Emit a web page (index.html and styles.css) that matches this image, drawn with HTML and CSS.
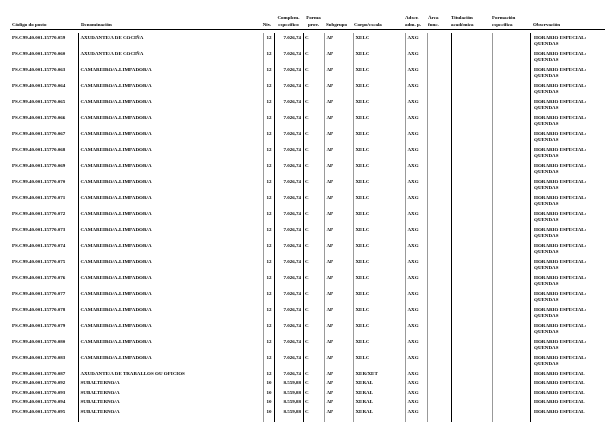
FILE: index.html
```html
<!DOCTYPE html>
<html lang="gl">
<head>
<meta charset="utf-8">
<title>RPT</title>
<link rel="stylesheet" href="styles.css">
</head>
<body>
<div class="sheet">
  <div class="grid head">
    <div class="h c1">Código do posto</div>
    <div class="h c2">Denominación</div>
    <div class="h c3 ctr">Nív.</div>
    <div class="h c4 ctr">Complem.<br>específico</div>
    <div class="h c5 ctr">Forma<br>prov.</div>
    <div class="h c6">Subgrupo</div>
    <div class="h c7">Corpo/escala</div>
    <div class="h c8">Adscr.<br>adm. p.</div>
    <div class="h c9">Área<br>func.</div>
    <div class="h c10">Titulación<br>académica</div>
    <div class="h c11">Formación<br>específica</div>
    <div class="h c12">Observación</div>
  </div>
  <div class="body" id="body"></div>
</div>
<script src="app.js"></script>
</body>
</html>
```

FILE: app.js
```js
const rows = [];
const cam = ["063","064","065","066","067","068","069","070","071","072","073","074","075","076","077","078","079","080","083"];
rows.push(["059","AXUDANTE/A DE COCIÑA","12","7.026,74","XELC","HORARIO ESPECIAL:<br>QUENDAS"]);
rows.push(["060","AXUDANTE/A DE COCIÑA","12","7.026,74","XELC","HORARIO ESPECIAL:<br>QUENDAS"]);
cam.forEach(c => rows.push([c,"CAMAREIRO/A-LIMPADOR/A","12","7.026,74","XELC","HORARIO ESPECIAL:<br>QUENDAS"]));
rows.push(["087","AXUDANTE/A DE TRABALLOS OU OFICIOS","12","7.026,74","XER/XET","HORARIO ESPECIAL"]);
["092","093","094","095"].forEach(c => rows.push([c,"SUBALTERNO/A","10","8.559,88","XERAL","HORARIO ESPECIAL"]));
const body = document.getElementById("body");
let html = "";
rows.forEach(r => {
  html += '<div class="grid row">' +
    '<div class="c c1">PS.C99.40.001.15770.' + r[0] + '</div>' +
    '<div class="c c2">' + r[1] + '</div>' +
    '<div class="c c3 ctr">' + r[2] + '</div>' +
    '<div class="c c4 rgt">' + r[3] + '</div>' +
    '<div class="c c5">C</div>' +
    '<div class="c c6">AP</div>' +
    '<div class="c c7">' + r[4] + '</div>' +
    '<div class="c c8">AXG</div>' +
    '<div class="c c9"></div>' +
    '<div class="c c10"></div>' +
    '<div class="c c11"></div>' +
    '<div class="c c12">' + r[5] + '</div>' +
    '</div>';
});
html += '<div class="grid row tail">' + '<div class="c c1"></div><div class="c c2"></div><div class="c c3"></div><div class="c c4"></div><div class="c c5"></div><div class="c c6"></div><div class="c c7"></div><div class="c c8"></div><div class="c c9"></div><div class="c c10"></div><div class="c c11"></div><div class="c c12"></div></div>';
body.innerHTML = html;
```

FILE: styles.css
```css
html, body {
  margin: 0;
  padding: 0;
  background: #fff;
}
body {
  font-family: "Liberation Serif", "Times New Roman", serif;
  font-weight: bold;
  font-size: 5px;
  line-height: 6.4px;
  color: #000;
  width: 615px;
  height: 439px;
  overflow: hidden;
}
.sheet {
  padding-left: 10px;
  width: 595px;
  background: #fff;
  filter: grayscale(1);
}
.grid {
  display: grid;
  grid-template-columns: 68px 185px 11px 29px 21px 29px 52px 22px 24px 41px 38px 75px;
}
.head {
  height: 30px;
  box-sizing: border-box;
  border-bottom: 1px solid #000;
  align-items: end;
  padding-bottom: 1px;
}
.h {
  white-space: nowrap;
}
.h.c1 { padding-left: 2px; }
.h.c2 { padding-left: 3px; }
.h.c3 { margin-left: -3px; }
.h.c6 { padding-left: 2px; }
.h.c7 { padding-left: 1px; }
.h.c9 { padding-left: 1px; }
.h.c12 { padding-left: 3px; }
.ctr { text-align: center; }
.rgt { text-align: right; }
.body {
  margin-top: 3px;
}
.c {
  padding: 1.6px 0 1.6px 1.5px;
  white-space: nowrap;
  box-sizing: border-box;
}
.c.c1 { padding-left: 2px; }
.c.c2 { border-left: 1px solid #000; }
.c.c3 { border-left: 1px solid #999; padding-left: 0; }
.c.c4 { border-left: 1px solid #000; padding-right: 2px; }
.c.c5 { border-left: 1px solid #000; padding-left: 1px; }
.c.c6 { border-left: 1px solid #999; }
.c.c7 { border-left: 1px solid #999; }
.c.c8 { border-left: 1px solid #999; }
.c.c9 { border-left: 1px solid #999; }
.c.c10 { border-left: 1px solid #000; }
.c.c11 { border-left: 1px solid #999; }
.c.c12 { border-left: 1px solid #000; padding-left: 3px; }
.tail .c { height: 5px; padding: 0; }
```
